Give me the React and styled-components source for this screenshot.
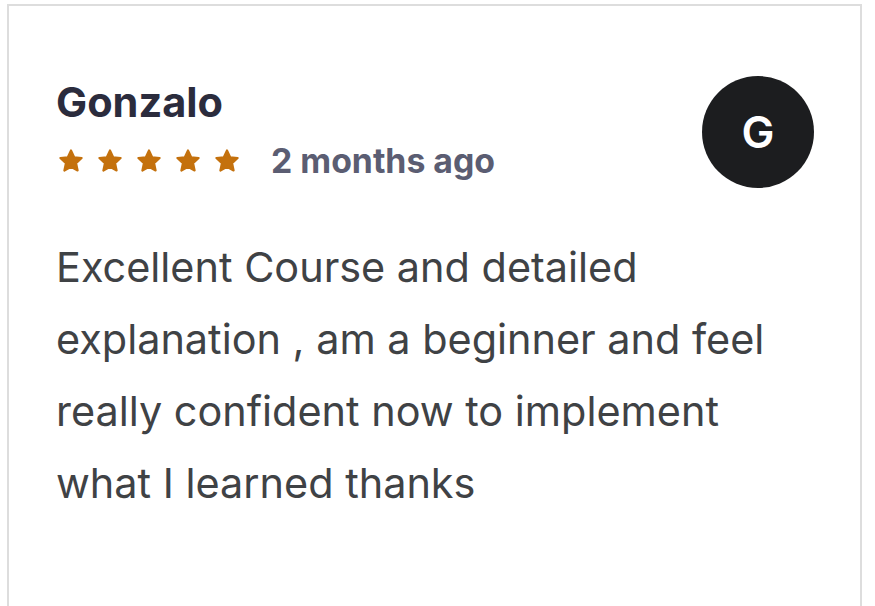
import React from "react";
import styled, { createGlobalStyle } from "styled-components";

const Global = createGlobalStyle`
  html, body { margin: 0; padding: 0; background: #ffffff; }
  body { font-family: Inter, "Liberation Sans", Arial, sans-serif; }
`;

const Page = styled.div`
  padding: 4px 13px 0 7px;
  height: 606px;
  box-sizing: border-box;
  overflow: hidden;
`;

const Card = styled.article`
  border: 2px solid #dddddd;
  border-bottom: none;
  height: 640px;
  box-sizing: border-box;
  padding: 70px 46px 0 47px;
  background: #fff;
`;

const Header = styled.header`
  display: flex;
  justify-content: space-between;
  align-items: flex-start;
`;

const Meta = styled.div`
  display: flex;
  flex-direction: column;
  gap: 14px;
`;

const Name = styled.h2`
  margin: 0;
  font-size: 41.5px;
  line-height: 52px;
  font-weight: 700;
  color: #2b2c3d;
`;

const RatingRow = styled.div`
  display: flex;
  align-items: center;
  gap: 31px;
`;

const Stars = styled.div`
  display: flex;
  gap: 13px;
  padding-left: 2px;
`;

const Ago = styled.span`
  font-size: 33.8px;
  font-weight: 700;
  color: #5b5d72;
  line-height: 38px;
`;

const Avatar = styled.div`
  width: 112px;
  height: 112px;
  border-radius: 50%;
  background: #1c1d1f;
  color: #fff;
  display: flex;
  align-items: center;
  justify-content: center;
  font-size: 44px;
  font-weight: 600;
`;

const Body = styled.p`
  margin: 43px 0 0;
  font-size: 41.4px;
  line-height: 72px;
  font-weight: 400;
  color: #3f4245;
  max-width: 740px;
`;

const Star = () => (
  <svg width="26" height="26" viewBox="0 0 24 24" aria-hidden="true">
    <path
      d="M12 2.2l2.9 6.3 6.9.8-5.1 4.7 1.4 6.8L12 17.4l-6.1 3.4 1.4-6.8-5.1-4.7 6.9-.8z"
      fill="#c4710d"
      stroke="#c4710d"
      strokeWidth="2"
      strokeLinejoin="round"
    />
  </svg>
);

export default function App() {
  return (
    <>
      <Global />
      <Page>
        <Card>
          <Header>
            <Meta>
              <Name>Gonzalo</Name>
              <RatingRow>
                <Stars>
                  {[0, 1, 2, 3, 4].map((i) => (
                    <Star key={i} />
                  ))}
                </Stars>
                <Ago>2 months ago</Ago>
              </RatingRow>
            </Meta>
            <Avatar>G</Avatar>
          </Header>
          <Body>
            Excellent Course and detailed explanation , am a beginner and feel
            really confident now to implement what I learned thanks
          </Body>
        </Card>
      </Page>
    </>
  );
}
